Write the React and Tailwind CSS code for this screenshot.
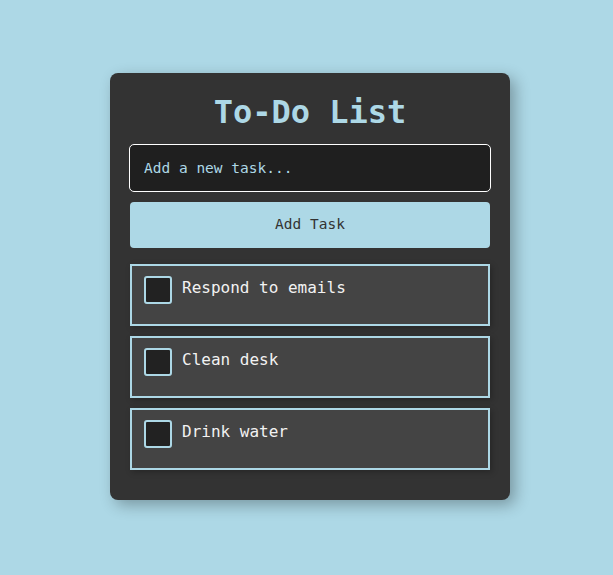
import { useState } from "react";

const mono = { fontFamily: '"DejaVu Sans Mono", "Liberation Mono", monospace' };

const starter = ["Respond to emails", "Clean desk", "Drink water"];

function TaskItem({ text, done, onToggle }) {
  return (
    <li className="flex items-start gap-[10px] h-[62px] px-[12px] pt-[10px] mb-[10px] bg-[#444444] border-2 border-[#add8e6] shadow-[2px_2px_6px_rgba(0,0,0,0.25)]">
      <button
        onClick={onToggle}
        className="w-[28px] h-[28px] shrink-0 rounded-[3px] border-2 border-[#add8e6] bg-[#222222]"
      />
      <span className={`text-[16px] leading-[24px] text-[#f2f2f2] ${done ? "line-through opacity-60" : ""}`}>
        {text}
      </span>
    </li>
  );
}

export default function App() {
  const [tasks, setTasks] = useState(starter.map((t) => ({ text: t, done: false })));
  const [draft, setDraft] = useState("");

  const addTask = () => {
    if (!draft.trim()) return;
    setTasks([...tasks, { text: draft.trim(), done: false }]);
    setDraft("");
  };

  const toggle = (i) =>
    setTasks(tasks.map((t, j) => (j === i ? { ...t, done: !t.done } : t)));

  return (
    <div className="min-h-screen bg-[#add8e6] flex items-center justify-center pl-[7px] pb-[2px]" style={mono}>
      <div className="w-[400px] bg-[#333333] rounded-[8px] px-[20px] pt-[20px] pb-[20px] shadow-[5px_5px_15px_rgba(0,0,0,0.3)]">
        <h1 className="text-center text-[32px] font-bold leading-[38px] text-[#add8e6] mb-[13px]">To-Do List</h1>
        <input
          value={draft}
          onChange={(e) => setDraft(e.target.value)}
          onKeyDown={(e) => e.key === "Enter" && addTask()}
          placeholder="Add a new task..."
          className="block w-[362px] -ml-px h-[48px] px-[14px] rounded-[5px] border border-white bg-[#1f1f1f] text-[14.5px] text-[#add8e6] placeholder:text-[#add8e6] outline-none"
          style={mono}
        />
        <button
          onClick={addTask}
          className="block w-full h-[46px] mt-[10px] mb-[16px] rounded-[4px] bg-[#add8e6] text-[14.5px] text-[#333333]"
          style={mono}
        >
          Add Task
        </button>
        <ul>
          {tasks.map((t, i) => (
            <TaskItem key={i} text={t.text} done={t.done} onToggle={() => toggle(i)} />
          ))}
        </ul>
      </div>
    </div>
  );
}
